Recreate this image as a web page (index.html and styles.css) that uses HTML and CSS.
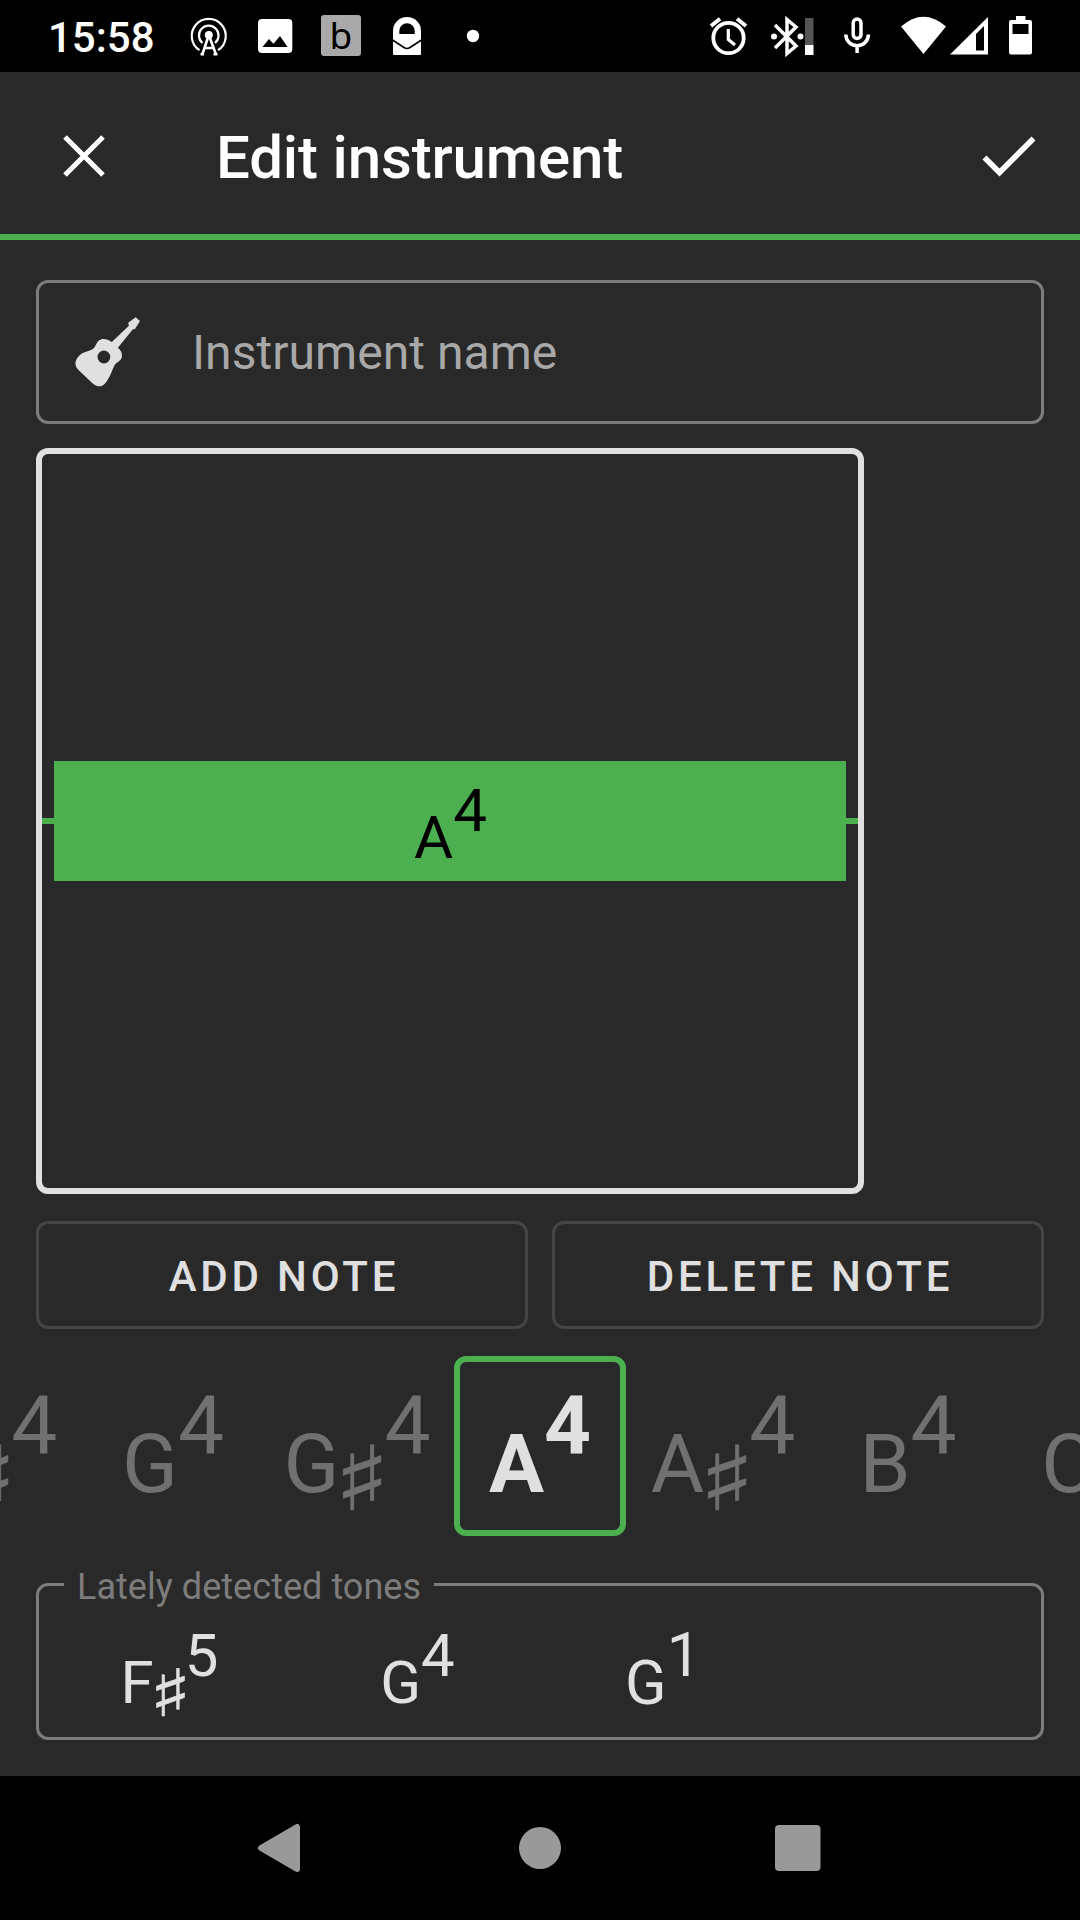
FILE: index.html
```html
<!DOCTYPE html>
<html lang="en">
<head>
<meta charset="utf-8">
<title>Edit instrument</title>
<link rel="stylesheet" href="styles.css">
</head>
<body>
<div class="status-bar">
  <span class="clock">15:58</span>
  <svg class="cell" viewBox="176 0 66 72" fill="none" stroke="#fff" stroke-width="2.2">
    <path d="M199.5 50.2A17 17 0 1 1 218 50.2"/>
    <path d="M202.5 43A9.800 9.800 0 1 1 215 43"/>
    <circle cx="208.800" cy="35" r="4" fill="#fff" stroke="none"/>
    <path d="M208.800 35L202.300 54.500M208.800 35L216 54.500M204.500 48H213.500M200.500 54.300H204M213.500 54.300H217.500" stroke-width="2.600"/>
  </svg>
  <svg class="cell" viewBox="242 0 66 72">
    <rect x="258" y="19" width="34.300" height="34" rx="4" fill="#fff"/>
    <path d="M262.500 47L269 39L273.500 43.700L280 36L287.500 47Z" fill="#000"/>
  </svg>
  <div class="cell"><span class="badge">b</span></div>
  <svg class="cell" viewBox="374 0 66 72">
    <path d="M393 54V31a14 14 0 0 1 28 0V54a1 1 0 0 1-1 1H394a1 1 0 0 1-1-1Z" fill="#fff"/>
    <path d="M399.300 34V31a7.700 7.700 0 0 1 15.400 0V34Z" fill="#000"/>
    <path d="M392.500 40L404 47.500Q407 49.500 410 47.500L421.500 40" fill="none" stroke="#000" stroke-width="1.600"/>
  </svg>
  <svg class="cell" viewBox="440 0 66 72"><circle cx="473" cy="36" r="6.200" fill="#fff"/></svg>
  <span class="spacer"></span>
  <svg class="cell-right" viewBox="696 0 64 72" fill="none" stroke="#fff">
    <circle cx="728.500" cy="38" r="15.200" stroke-width="3.800"/>
    <path d="M728.300 29V39.500L735 45" stroke-width="3.200"/>
    <path d="M711 26L720 18.700M737 18.700L746 26" stroke-width="4"/>
  </svg>
  <svg class="cell-right" viewBox="760 0 64 72">
    <path d="M775 25L796 46L787 53.500V19.500L796 27L775 48" fill="none" stroke="#fff" stroke-width="3.500"/>
    <circle cx="774" cy="36.500" r="3" fill="#fff"/><circle cx="800.500" cy="36.500" r="3" fill="#fff"/>
    <path d="M805 18H813.500V45H805Z" fill="#555"/><path d="M805 45H813.500V55H805Z" fill="#fff"/>
  </svg>
  <svg class="cell-right" viewBox="824 0 64 72" fill="none" stroke="#fff" stroke-width="3.500">
    <rect x="853.200" y="19" width="7.800" height="19.500" rx="3.900"/>
    <path d="M845.800 34.500a11.300 11.300 0 0 0 22.600 0M857.100 45.500V53"/>
  </svg>
  <svg class="wifi" viewBox="888 0 60 72"><path d="M901 26.500Q923.500 7 946 26.500L923.500 54Z" fill="#fff"/></svg>
  <svg class="signal" viewBox="948 0 40 72">
    <path d="M950 54.500L988 17V54.500ZM976 50.500H984V26L976 34Z" fill="#fff" fill-rule="evenodd"/>
  </svg>
  <svg class="battery" viewBox="1005 0 31 72">
    <path d="M1016 16H1025.500V20H1030a2 2 0 0 1 2 2V52.500a2 2 0 0 1-2 2H1011a2 2 0 0 1-2-2V22a2 2 0 0 1 2-2H1016ZM1012.500 24V34H1028.500V24Z" fill="#fff" fill-rule="evenodd"/>
  </svg>
</div>

<header class="app-bar">
  <svg class="close" viewBox="0 0 42 42"><path d="M2 2L40 40M40 2L2 40" stroke="#fff" stroke-width="5"/></svg>
  <h1 class="title">Edit instrument</h1>
  <svg class="check" viewBox="0 0 54 42"><path d="M2.500 21.500L17.500 36.500L51.500 2.500" fill="none" stroke="#fff" stroke-width="5.600"/></svg>
</header>

<main class="content">
  <div class="name-field">
    <svg class="guitar" viewBox="0 0 72 76">
      <path d="M63.700 3.300L68 7L65.500 11L63 15L60.900 15.200L45.900 33.700C49 36 50.500 39.500 49.800 43.300C49 47 44 48.500 42.300 51.700C40 56 38.500 62 35.500 66C33 70 31 72.300 27.300 72.300C24 72.300 21.500 70.300 19.400 68.300L7 56.500C4.500 54 3.400 52 3.400 49.300C3.500 46 5.500 43.200 8 41C12 37.500 16 37.800 20.500 35.300C24 32.500 24 29 26.600 26.700C30 24.200 35 24.500 39.800 28L56.900 11.700L56.200 8.700Z" fill="#e0e0e0"/>
      <circle cx="31.900" cy="43" r="6.400" fill="#292929"/>
    </svg>
    <span class="placeholder">Instrument name</span>
  </div>

  <section class="strings">
    <div class="string-line"><div class="string"><span class="note">A<sup>4</sup></span></div></div>
  </section>

  <div class="buttons">
    <button class="button">ADD NOTE</button>
    <button class="button">DELETE NOTE</button>
  </div>

  <div class="picker">
    <span class="pick note gap-s">F<i class="sharp">♯</i><sup>4</sup></span>
    <span class="pick note gap-s">G<sup>4</sup></span>
    <span class="pick note">G<i class="sharp">♯</i><sup>4</sup></span>
    <span class="pick note selected">A<sup>4</sup></span>
    <span class="pick note gap-m">A<i class="sharp">♯</i><sup>4</sup></span>
    <span class="pick note">B<sup>4</sup></span>
    <span class="pick note">C<sup>5</sup></span>
  </div>

  <fieldset class="detected">
    <legend class="legend">Lately detected tones</legend>
    <div class="tones">
      <span class="note">F<i class="sharp">♯</i><sup>5</sup></span>
      <span class="note">G<sup>4</sup></span>
      <span class="note large">G<sup>1</sup></span>
    </div>
  </fieldset>
</main>

<nav class="nav-bar">
  <svg class="nav-icon" viewBox="0 0 54 54"><path d="M6 27L42 6V48Z" fill="#999" stroke="#999" stroke-width="6" stroke-linejoin="round"/></svg>
  <svg class="nav-icon" viewBox="0 0 54 54"><circle cx="27" cy="27" r="21" fill="#999"/></svg>
  <svg class="nav-icon" viewBox="0 0 54 54"><rect x="4" y="4" width="45.500" height="46" rx="4" fill="#999"/></svg>
</nav>
</body>
</html>
```
FILE: styles.css
```css
* { box-sizing: border-box; }

body {
  margin: 0;
  width: 1080px;
  height: 1920px;
  display: flex;
  flex-direction: column;
  overflow: hidden;
  background: #292929;
  color: #e0e0e0;
  font-family: Roboto, sans-serif;
}

svg { display: block; flex: none; }

.status-bar {
  height: 72px;
  flex: none;
  display: flex;
  align-items: center;
  padding: 0 44px 0 48px;
  background: #000;
  color: #fff;
}
.clock { width: 128px; padding-top: 4px; font-size: 42px; font-weight: 500; line-height: 60px; }
.cell { width: 66px; height: 72px; display: flex; align-items: center; justify-content: center; padding-bottom: 1px; }
svg.cell { padding: 0; }
.badge {
  width: 40px;
  height: 41px;
  border-radius: 3px;
  background: #a9a9a9;
  color: #000;
  font: 37px/39px "Noto Sans", sans-serif;
  text-align: center;
}
.spacer { flex: 1; }
.cell-right { width: 64px; height: 72px; }
.wifi { width: 60px; height: 72px; }
.signal { width: 40px; height: 72px; }
.battery { width: 31px; height: 72px; margin-left: 17px; }

.app-bar {
  height: 168px;
  flex: none;
  display: flex;
  align-items: center;
  padding: 6px 44px 0 63px;
  border-bottom: 6px solid #4caf50;
  color: #fff;
}
.close { width: 42px; height: 42px; }
.title {
  flex: 1;
  margin: 0 0 0 111px;
  padding-top: 4px;
  font-size: 60px;
  font-weight: 500;
  line-height: 72px;
  letter-spacing: -0.15px;
}
.check { width: 54px; height: 42px; margin-top: 2px; }

.content { height: 1536px; flex: none; padding: 40px 36px 0; }

.name-field {
  height: 144px;
  display: flex;
  align-items: center;
  padding-left: 33px;
  border: 3px solid #7c7c7c;
  border-radius: 12px;
}
.guitar { width: 72px; height: 76px; }
.placeholder { margin-left: 48px; padding-top: 2px; color: #a8a8a8; font-size: 48px; line-height: 56px; letter-spacing: 0.05px; }

.strings {
  width: 828px;
  height: 746px;
  margin-top: 24px;
  display: flex;
  align-items: center;
  border: 6px solid #e0e0e0;
  border-radius: 12px;
}
.string-line {
  flex: 1;
  padding: 0 12px;
  background: linear-gradient(#4caf50, #4caf50) center / 100% 6px no-repeat;
}
.string {
  height: 120px;
  padding-left: 1px;
  background: #4caf50;
  color: #000;
  font-size: 60px;
  line-height: 153px;
  text-align: center;
}

.note { white-space: nowrap; }
.note sup { font-size: inherit; line-height: 0; vertical-align: 0.455em; }
.sharp {
  display: inline-block;
  width: 0.55em;
  font-family: "DejaVu Sans", sans-serif;
  font-style: normal;
  line-height: 0;
  text-align: center;
  -webkit-text-stroke: 0.5px currentColor;
  transform: translate(0.01em, 0.19em) scale(1.45, 1.09);
}

.buttons { display: grid; grid-template-columns: 1fr 1fr; gap: 24px; margin-top: 27px; }
.button {
  height: 108px;
  padding: 4px 0 0 4px;
  border: 3px solid #454545;
  border-radius: 12px;
  background: none;
  color: #e0e0e0;
  font: 500 42px/48px Roboto, sans-serif;
  letter-spacing: 3.8px;
}

.picker {
  height: 180px;
  margin: 27px -36px 0;
  display: flex;
  justify-content: center;
  overflow: hidden;
}
.pick {
  width: 183px;
  flex: none;
  color: #707070;
  font-size: 82px;
  line-height: 216px;
  text-align: center;
}
.pick sup { vertical-align: 0.463em; }
.gap-s { margin-right: 1px; }
.gap-m { margin-right: 2px; }
.selected {
  width: 172px;
  margin: 0 5.500px;
  border: 6px solid #4caf50;
  border-radius: 12px;
  color: #e0e0e0;
  font-weight: 700;
  line-height: 204px;
}

.detected {
  height: 180px;
  margin: 24px 0 0;
  padding: 0;
  border: 3px solid #7c7c7c;
  border-radius: 12px;
}
.legend { margin-left: 25px; padding: 6px 12.500px 0 13px; color: #7c7c7c; font-size: 36px; line-height: 42px; letter-spacing: 0.04px; }
.tones {
  display: grid;
  grid-template-columns: 261px 235px 256px 1fr;
  padding-top: 15px;
  font-size: 60px;
  line-height: 119px;
  text-align: center;
}
.tones .sharp { width: 0.52em; }
.large { font-size: 61px; line-height: 121px; }

.nav-bar {
  height: 144px;
  flex: none;
  display: flex;
  align-items: center;
  justify-content: space-between;
  padding: 0 255px;
  background: #000;
}
.nav-icon { width: 54px; height: 54px; }
```
